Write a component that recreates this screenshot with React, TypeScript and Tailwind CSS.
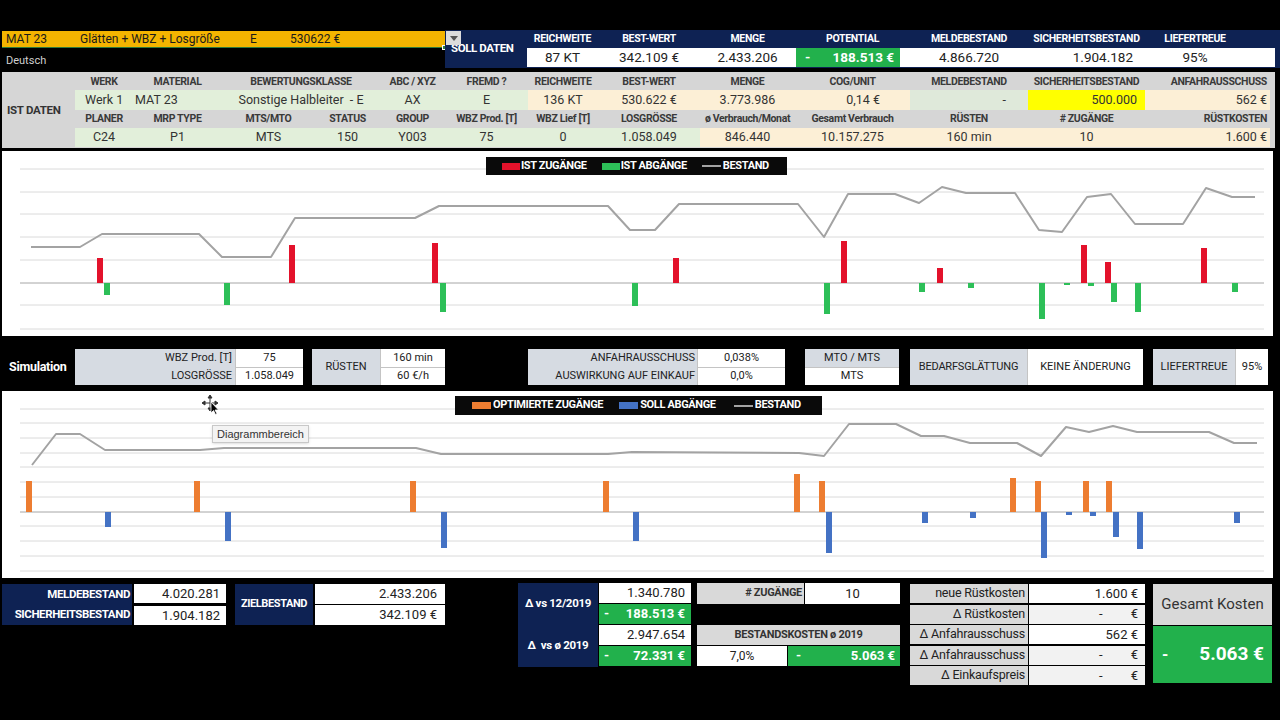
import React from 'react';

const FONT = "font-['Roboto','Liberation_Sans',Arial,sans-serif]";

type Pt = [number, number];

// chart data in page coordinates (the svg viewBox matches the page)
const LINE_IST =
  '31,247 80,247 102,234 199,234 222,257 271,257 295,218 415,218 439,206 608,206 630,230 655,230 679,204 798,204 824,237 848,194 895,194 919,203 942,187 966,193 1015,193 1039,230 1062,232 1087,197 1111,194 1135,224 1183,224 1206,188 1232,197 1255,197';
const UP_IST: Pt[] = [[97, 258], [289, 245], [432, 243], [673, 258], [841, 241], [937, 268], [1081, 245], [1105, 262], [1201, 248]];
const DOWN_IST: Pt[] = [[104, 295], [224, 305], [440, 312], [632, 306], [824, 314], [919, 292], [968, 288], [1039, 319], [1064, 285], [1088, 286], [1111, 302], [1135, 312], [1232, 292]];
const GRID_IST = [169, 192, 214, 237, 260, 283, 305, 329];

const LINE_SIM =
  '32,465 56,434 80,434 105,450 200,450 224,448 416,448 441,454 608,454 632,452 799,453 824,456 849,424 896,424 921,436 944,436 970,443 1017,443 1041,456 1066,427 1089,432 1113,426 1137,432 1209,432 1234,443 1257,443';
const UP_SIM: Pt[] = [[26, 481], [194, 481], [410, 481], [603, 481], [794, 474], [819, 481], [1010, 478], [1035, 481], [1083, 481], [1106, 481]];
const DOWN_SIM: Pt[] = [[105, 527], [225, 541], [441, 548], [633, 541], [826, 553], [922, 523], [970, 518], [1041, 558], [1066, 515], [1090, 516], [1113, 537], [1137, 549], [1234, 523]];
const GRID_SIM = [409, 423, 438, 453, 467, 482, 497, 512, 526, 541, 556, 571];

function Plot({ top, height, grid, zero, line, up, down, upColor, downColor }: {
  top: number; height: number; grid: number[]; zero: number; line: string;
  up: Pt[]; down: Pt[]; upColor: string; downColor: string;
}) {
  return (
    <svg width={1271} height={height} viewBox={`2 ${top} 1271 ${height}`} className="block">
      {grid.map((y) => (
        <line key={y} x1={20} x2={1264} y1={y} y2={y} stroke={y === zero ? '#a6a6a6' : '#dadada'} strokeWidth={1} />
      ))}
      {up.map(([x, y]) => (
        <rect key={'u' + x} x={x} y={y} width={6} height={zero - y} fill={upColor} />
      ))}
      {down.map(([x, y]) => (
        <rect key={'d' + x} x={x} y={zero} width={6} height={y - zero} fill={downColor} />
      ))}
      <polyline points={line} fill="none" stroke="#a3a3a3" strokeWidth={2} strokeLinejoin="round" />
    </svg>
  );
}

const sollCols = [
  { h: 'REICHWEITE', w: 'w-[71px]' },
  { h: 'BEST-WERT', w: 'w-[102px]' },
  { h: 'MENGE', w: 'w-[95px]' },
  { h: 'POTENTIAL', w: 'w-[115px]' },
  { h: 'MELDEBESTAND', w: 'w-[118px]' },
  { h: 'SICHERHEITSBESTAND', w: 'w-[117px]' },
  { h: 'LIEFERTREUE', w: 'w-[100px]' },
];

const istHead1 = ['WERK', 'MATERIAL', 'BEWERTUNGSKLASSE', 'ABC / XYZ', 'FREMD ?', 'REICHWEITE', 'BEST-WERT', 'MENGE', 'COG/UNIT', 'MELDEBESTAND', 'SICHERHEITSBESTAND'];
const istHead2 = ['PLANER', 'MRP TYPE', 'MTS/MTO', 'STATUS', 'GROUP', 'WBZ Prod. [T]', 'WBZ Lief [T]', 'LOSGRÖSSE', 'ø Verbrauch/Monat', 'Gesamt Verbrauch', 'RÜSTEN', '# ZUGÄNGE'];
const istVal2 = ['C24', 'P1', 'MTS', '150', 'Y003', '75', '0', '1.058.049', '846.440', '10.157.275', '160 min', '10'];

const GREEN_L = 'bg-[#e2efda]';
const ORANGE_L = 'bg-[#fcefd6]';
const HEAD = 'text-[10.5px] font-bold text-[#3a3a3a] tracking-[-0.35px] whitespace-nowrap';

function Dash({ gap = 'ml-[28px]' }: { gap?: string }) {
  return (
    <span className="flex">
      <span>-</span>
      <span className={gap}>€</span>
    </span>
  );
}

export default function App() {
  return (
    <div className={`w-[1280px] h-[720px] overflow-hidden bg-black ${FONT}`}>
      {/* top bar + SOLL DATEN */}
      <div className="flex h-[38px] mt-[30px]">
        <div className="relative w-[445px] shrink-0 pl-[2px] pt-[1px]">
          <div className="h-[17px] bg-[#f4b400] border-b border-[#2f7a3c] flex items-center text-[12px] text-[#1a1a1a] leading-none">
            <span className="w-[78px] pl-[4px]">MAT 23</span>
            <span className="w-[170px]">Glätten + WBZ + Losgröße</span>
            <span className="w-[40px]">E</span>
            <span>530622 €</span>
          </div>
          <div className="absolute right-[-2px] top-[15px] w-[5px] h-[5px] bg-[#2f7a3c] border border-white" />
          <div className="mt-[7px] pl-[4px] text-[11px] text-[#d0d0d0] leading-none">Deutsch</div>
        </div>
        <div className="relative flex flex-1 bg-[#0e2253]">
          <div className="absolute left-[1px] top-[1px] w-[15px] h-[14px] bg-[#dcdcdc] flex items-center justify-center">
            <div className="w-0 h-0 border-l-[4px] border-r-[4px] border-t-[5px] border-l-transparent border-r-transparent border-t-[#555]" />
          </div>
          <div className="w-[82px] shrink-0 pt-[13px] pl-[6px] text-[11.5px] font-bold text-white leading-none tracking-[-0.4px] whitespace-nowrap">SOLL DATEN</div>
          <div className="flex flex-col">
            <div className="flex h-[18px] text-[10.5px] font-bold text-white tracking-[-0.3px] whitespace-nowrap">
              {sollCols.map((c) => (
                <div key={c.h} className={`${c.w} flex items-center justify-center`}>{c.h}</div>
              ))}
            </div>
            <div className="flex h-[19px] w-[748px] bg-white text-[13.5px] text-[#222]">
              <div className="w-[71px] flex items-center justify-center">87 KT</div>
              <div className="w-[102px] flex items-center justify-center">342.109 €</div>
              <div className="w-[95px] flex items-center justify-center">2.433.206</div>
              <div className="w-[115px] flex">
                <div className="ml-[1px] w-[104px] bg-[#22b14c] text-white font-bold flex items-center justify-between pl-[9px] pr-[6px]">
                  <span>-</span>
                  <span>188.513 €</span>
                </div>
              </div>
              <div className="w-[118px] flex items-center justify-center">4.866.720</div>
              <div className="w-[117px] flex items-center justify-end pr-[12px]">1.904.182</div>
              <div className="w-[100px] flex items-center justify-center">95%</div>
            </div>
          </div>
        </div>
      </div>

      {/* IST DATEN */}
      <div className="flex mt-[4px] ml-[2px] w-[1273px] h-[76px] bg-[#d6d6d6] pt-[2px]">
        <div className="w-[73px] shrink-0 flex items-center pl-[5px] text-[11.5px] font-bold text-[#333] tracking-[-0.3px]">IST DATEN</div>
        <div className="grid grid-cols-[58px_89px_93px_65px_65px_83px_70px_102px_95px_115px_118px_117px_125px] grid-rows-[16px_20px_18px_19px] text-[#333] text-[12.5px]">
          {istHead1.map((h, i) => (
            <div key={h} className={`flex items-center justify-center ${HEAD} ${i === 2 ? 'col-span-2' : ''}`}>{h}</div>
          ))}
          <div className={`flex items-center justify-end pr-[3px] ${HEAD}`}>ANFAHRAUSSCHUSS</div>

          <div className={`${GREEN_L} flex items-center pl-[10px]`}>Werk 1</div>
          <div className={`${GREEN_L} flex items-center pl-[2px]`}>MAT 23</div>
          <div className={`${GREEN_L} col-span-2 flex items-center justify-center whitespace-pre`}>Sonstige Halbleiter  - E</div>
          <div className={`${GREEN_L} flex items-center justify-center`}>AX</div>
          <div className={`${GREEN_L} flex items-center justify-center`}>E</div>
          <div className={`${ORANGE_L} flex items-center justify-center`}>136 KT</div>
          <div className={`${ORANGE_L} flex items-center justify-center`}>530.622 €</div>
          <div className={`${ORANGE_L} flex items-center justify-center`}>3.773.986</div>
          <div className={`${ORANGE_L} flex items-center justify-end pr-[30px]`}>0,14 €</div>
          <div className="bg-[#dfe9da] flex items-center justify-end pr-[22px]">-</div>
          <div className="bg-[#ffff00] flex items-center justify-end pr-[8px]">500.000</div>
          <div className={`${ORANGE_L} flex items-center justify-end pr-[3px]`}>562 €</div>

          {istHead2.map((h) => (
            <div key={h} className={`flex items-center justify-center ${HEAD}`}>{h}</div>
          ))}
          <div className={`flex items-center justify-end pr-[3px] ${HEAD}`}>RÜSTKOSTEN</div>

          {istVal2.map((v, i) => (
            <div key={v + i} className={`${i < 8 ? GREEN_L : ORANGE_L} flex items-center justify-center`}>{v}</div>
          ))}
          <div className={`${ORANGE_L} flex items-center justify-end pr-[3px]`}>1.600 €</div>
        </div>
      </div>

      {/* IST chart */}
      <div className="relative mt-[3px] ml-[2px] w-[1271px] h-[185px] bg-white">
        <Plot top={151} height={185} grid={GRID_IST} zero={283} line={LINE_IST} up={UP_IST} down={DOWN_IST} upColor="#e3122b" downColor="#2dbf58" />
        <div className="absolute left-[484px] top-[6px] w-[301px] h-[18px] bg-[#0a0a0a] flex items-center pl-[16px] text-[11px] font-bold text-white tracking-[-0.35px] whitespace-nowrap">
          <span className="w-[18px] h-[7px] bg-[#e3122b] mr-[1px]" />
          <span>IST ZUGÄNGE</span>
          <span className="w-[18px] h-[7px] bg-[#2dbf58] ml-[15px] mr-[1px]" />
          <span>IST ABGÄNGE</span>
          <span className="w-[19px] h-[2px] bg-[#a3a3a3] ml-[15px] mr-[2px]" />
          <span>BESTAND</span>
        </div>
      </div>

      {/* Simulation */}
      <div className="flex h-[36px] mt-[13px] text-[11px] text-[#222] whitespace-nowrap">
        <div className="w-[75px] shrink-0 flex items-center pl-[9px] text-[12.5px] font-bold text-white tracking-[-0.3px]">Simulation</div>
        <div className="flex gap-px bg-[#c4c4c4]">
          <div className="w-[160px] bg-[#d6dbe2] flex flex-col justify-around items-end pr-[3px]">
            <span>WBZ Prod. [T]</span>
            <span>LOSGRÖSSE</span>
          </div>
          <div className="w-[67px] flex flex-col gap-px">
            <div className="flex-1 bg-white flex items-center justify-center">75</div>
            <div className="flex-1 bg-white flex items-center justify-center">1.058.049</div>
          </div>
        </div>
        <div className="flex gap-px bg-[#c4c4c4] ml-[9px]">
          <div className="w-[68px] bg-[#d6dbe2] flex items-center justify-center">RÜSTEN</div>
          <div className="w-[64px] flex flex-col gap-px">
            <div className="flex-1 bg-white flex items-center justify-center">160 min</div>
            <div className="flex-1 bg-white flex items-center justify-center">60 €/h</div>
          </div>
        </div>
        <div className="flex gap-px bg-[#c4c4c4] ml-[83px]">
          <div className="w-[169px] bg-[#d6dbe2] flex flex-col justify-around items-end pr-[2px]">
            <span>ANFAHRAUSSCHUSS</span>
            <span>AUSWIRKUNG AUF EINKAUF</span>
          </div>
          <div className="w-[87px] flex flex-col gap-px">
            <div className="flex-1 bg-white flex items-center justify-center">0,038%</div>
            <div className="flex-1 bg-white flex items-center justify-center">0,0%</div>
          </div>
        </div>
        <div className="w-[94px] flex flex-col gap-px bg-[#c4c4c4] ml-[20px]">
          <div className="flex-1 bg-[#d6dbe2] flex items-center justify-center">MTO / MTS</div>
          <div className="flex-1 bg-white flex items-center justify-center">MTS</div>
        </div>
        <div className="flex gap-px bg-[#c4c4c4] ml-[11px]">
          <div className="w-[117px] bg-[#d6dbe2] flex items-center justify-center tracking-[-0.2px]">BEDARFSGLÄTTUNG</div>
          <div className="w-[115px] bg-white flex items-center justify-center">KEINE ÄNDERUNG</div>
        </div>
        <div className="flex gap-px bg-[#c4c4c4] ml-[10px]">
          <div className="w-[82px] bg-[#d6dbe2] flex items-center justify-center">LIEFERTREUE</div>
          <div className="w-[32px] bg-white flex items-center justify-center">95%</div>
        </div>
      </div>

      {/* SIM chart */}
      <div className="relative mt-[6px] ml-[2px] w-[1271px] h-[187px] bg-white">
        <Plot top={391} height={187} grid={GRID_SIM} zero={512} line={LINE_SIM} up={UP_SIM} down={DOWN_SIM} upColor="#ed7d31" downColor="#4472c4" />
        <div className="absolute left-[453px] top-[5px] w-[367px] h-[19px] bg-[#0a0a0a] flex items-center pl-[17px] text-[11px] font-bold text-white tracking-[-0.35px] whitespace-nowrap">
          <span className="w-[19px] h-[7px] bg-[#ed7d31] mr-[2px]" />
          <span>OPTIMIERTE ZUGÄNGE</span>
          <span className="w-[19px] h-[7px] bg-[#4472c4] ml-[16px] mr-[2px]" />
          <span>SOLL ABGÄNGE</span>
          <span className="w-[19px] h-[2px] bg-[#a3a3a3] ml-[18px] mr-[2px]" />
          <span>BESTAND</span>
        </div>
        <svg className="absolute left-[200px] top-[4px]" width="18" height="20" viewBox="0 0 18 20">
          <g stroke="#333" strokeWidth="1" fill="#333">
            <line x1="8" y1="1" x2="8" y2="15" />
            <line x1="1" y1="8" x2="15" y2="8" />
            <path d="M8 0 L6 3 L10 3 Z" />
            <path d="M8 16 L6 13 L10 13 Z" />
            <path d="M0 8 L3 6 L3 10 Z" />
            <path d="M16 8 L13 6 L13 10 Z" />
          </g>
          <path d="M9 7 L9 18 L11.5 15.5 L13.5 19.5 L15 18.8 L13 15 L16.5 15 Z" fill="#000" stroke="#fff" strokeWidth="0.8" />
        </svg>
        <div className="absolute left-[210px] top-[34px] h-[18px] px-[4px] bg-[#f3f3f3] border border-[#c8c8c8] shadow-sm flex items-center text-[11px] text-[#333] font-['Liberation_Sans',Arial,sans-serif]">
          Diagrammbereich
        </div>
      </div>

      {/* bottom */}
      <div className="flex mt-[5px] text-[13px] text-[#222]">
        <div className="flex mt-[1px] ml-[2px] h-[41px]">
          <div className="w-[130px] bg-[#0e2253] flex flex-col justify-around items-end pr-[2px] text-[11.5px] font-bold text-white tracking-[-0.4px] whitespace-nowrap">
            <span>MELDEBESTAND</span>
            <span>SICHERHEITSBESTAND</span>
          </div>
          <div className="ml-[2px] w-[92px] flex flex-col justify-between">
            <div className="h-[19px] bg-white flex items-center justify-end pr-[6px]">4.020.281</div>
            <div className="h-[19px] bg-white flex items-center justify-end pr-[6px]">1.904.182</div>
          </div>
        </div>

        <div className="flex mt-[1px] ml-[9px] h-[41px]">
          <div className="w-[78px] bg-[#0e2253] flex items-center justify-center text-[11px] font-bold text-white tracking-[-0.4px]">ZIELBESTAND</div>
          <div className="ml-[2px] w-[130px] flex flex-col justify-between">
            <div className="h-[20px] bg-white flex items-center justify-end pr-[8px]">2.433.206</div>
            <div className="h-[20px] bg-white flex items-center justify-end pr-[8px]">342.109 €</div>
          </div>
        </div>

        <div className="flex ml-[73px] h-[84px]">
          <div className="w-[80px] bg-[#0e2253] flex flex-col justify-around items-center text-[11.5px] font-bold text-white whitespace-pre tracking-[-0.3px]">
            <span>Δ vs 12/2019</span>
            <span>Δ  vs ø 2019</span>
          </div>
          <div className="ml-[1px] w-[92px] flex flex-col gap-px">
            <div className="h-[20px] bg-white flex items-center justify-end pr-[6px]">1.340.780</div>
            <div className="h-[20px] bg-[#22b14c] text-white font-bold flex items-center justify-between pl-[5px] pr-[6px]"><span>-</span><span>188.513 €</span></div>
            <div className="h-[20px] bg-white flex items-center justify-end pr-[6px]">2.947.654</div>
            <div className="h-[20px] bg-[#22b14c] text-white font-bold flex items-center justify-between pl-[5px] pr-[6px]"><span>-</span><span>72.331 €</span></div>
          </div>
        </div>

        <div className="ml-[6px] w-[203px] flex flex-col">
          <div className="h-[21px] flex gap-px">
            <div className="w-[107px] bg-[#d9d9d9] flex items-center justify-end pr-[2px] text-[11px] font-bold text-[#333] tracking-[-0.3px]"># ZUGÄNGE</div>
            <div className="flex-1 bg-white flex items-center justify-center">10</div>
          </div>
          <div className="h-[21px]" />
          <div className="h-[20px] bg-[#d9d9d9] flex items-center justify-center text-[11px] font-bold text-[#333] tracking-[-0.3px]">BESTANDSKOSTEN ø 2019</div>
          <div className="h-[20px] mt-px flex gap-px">
            <div className="w-[90px] bg-white flex items-center justify-center text-[12px]">7,0%</div>
            <div className="flex-1 bg-[#22b14c] text-white font-bold flex items-center justify-between pl-[8px] pr-[5px]"><span>-</span><span>5.063 €</span></div>
          </div>
        </div>

        <div className="ml-[10px] mt-[1px] w-[235px] flex flex-col gap-[1.5px] text-[12.5px]">
          {[
            ['neue Rüstkosten', <span>1.600 €</span>, 'bg-white'],
            ['Δ Rüstkosten', <Dash />, 'bg-[#f2f2f2]'],
            ['Δ Anfahrausschuss', <span>562 €</span>, 'bg-white'],
            ['Δ Anfahrausschuss', <Dash />, 'bg-[#f2f2f2]'],
            ['Δ Einkaufspreis', <Dash />, 'bg-[#f2f2f2]'],
          ].map(([label, val, bg], i) => (
            <div key={i} className="h-[19px] flex gap-px">
              <div className="w-[118px] bg-[#d9d9d9] flex items-center justify-end pr-[3px] tracking-[-0.2px]">{label}</div>
              <div className={`flex-1 ${bg as string} flex items-center justify-end pr-[7px] text-[13px]`}>{val}</div>
            </div>
          ))}
        </div>

        <div className="ml-[8px] mt-[1px] w-[119px] flex flex-col gap-px">
          <div className="h-[41px] bg-[#d9d9d9] flex items-center justify-center text-[15px] text-[#333]">Gesamt Kosten</div>
          <div className="h-[57px] bg-[#22b14c] text-white font-bold flex items-center justify-between pl-[9px] pr-[8px]">
            <span className="text-[16px]">-</span>
            <span className="text-[19px]">5.063 €</span>
          </div>
        </div>
      </div>
    </div>
  );
}
